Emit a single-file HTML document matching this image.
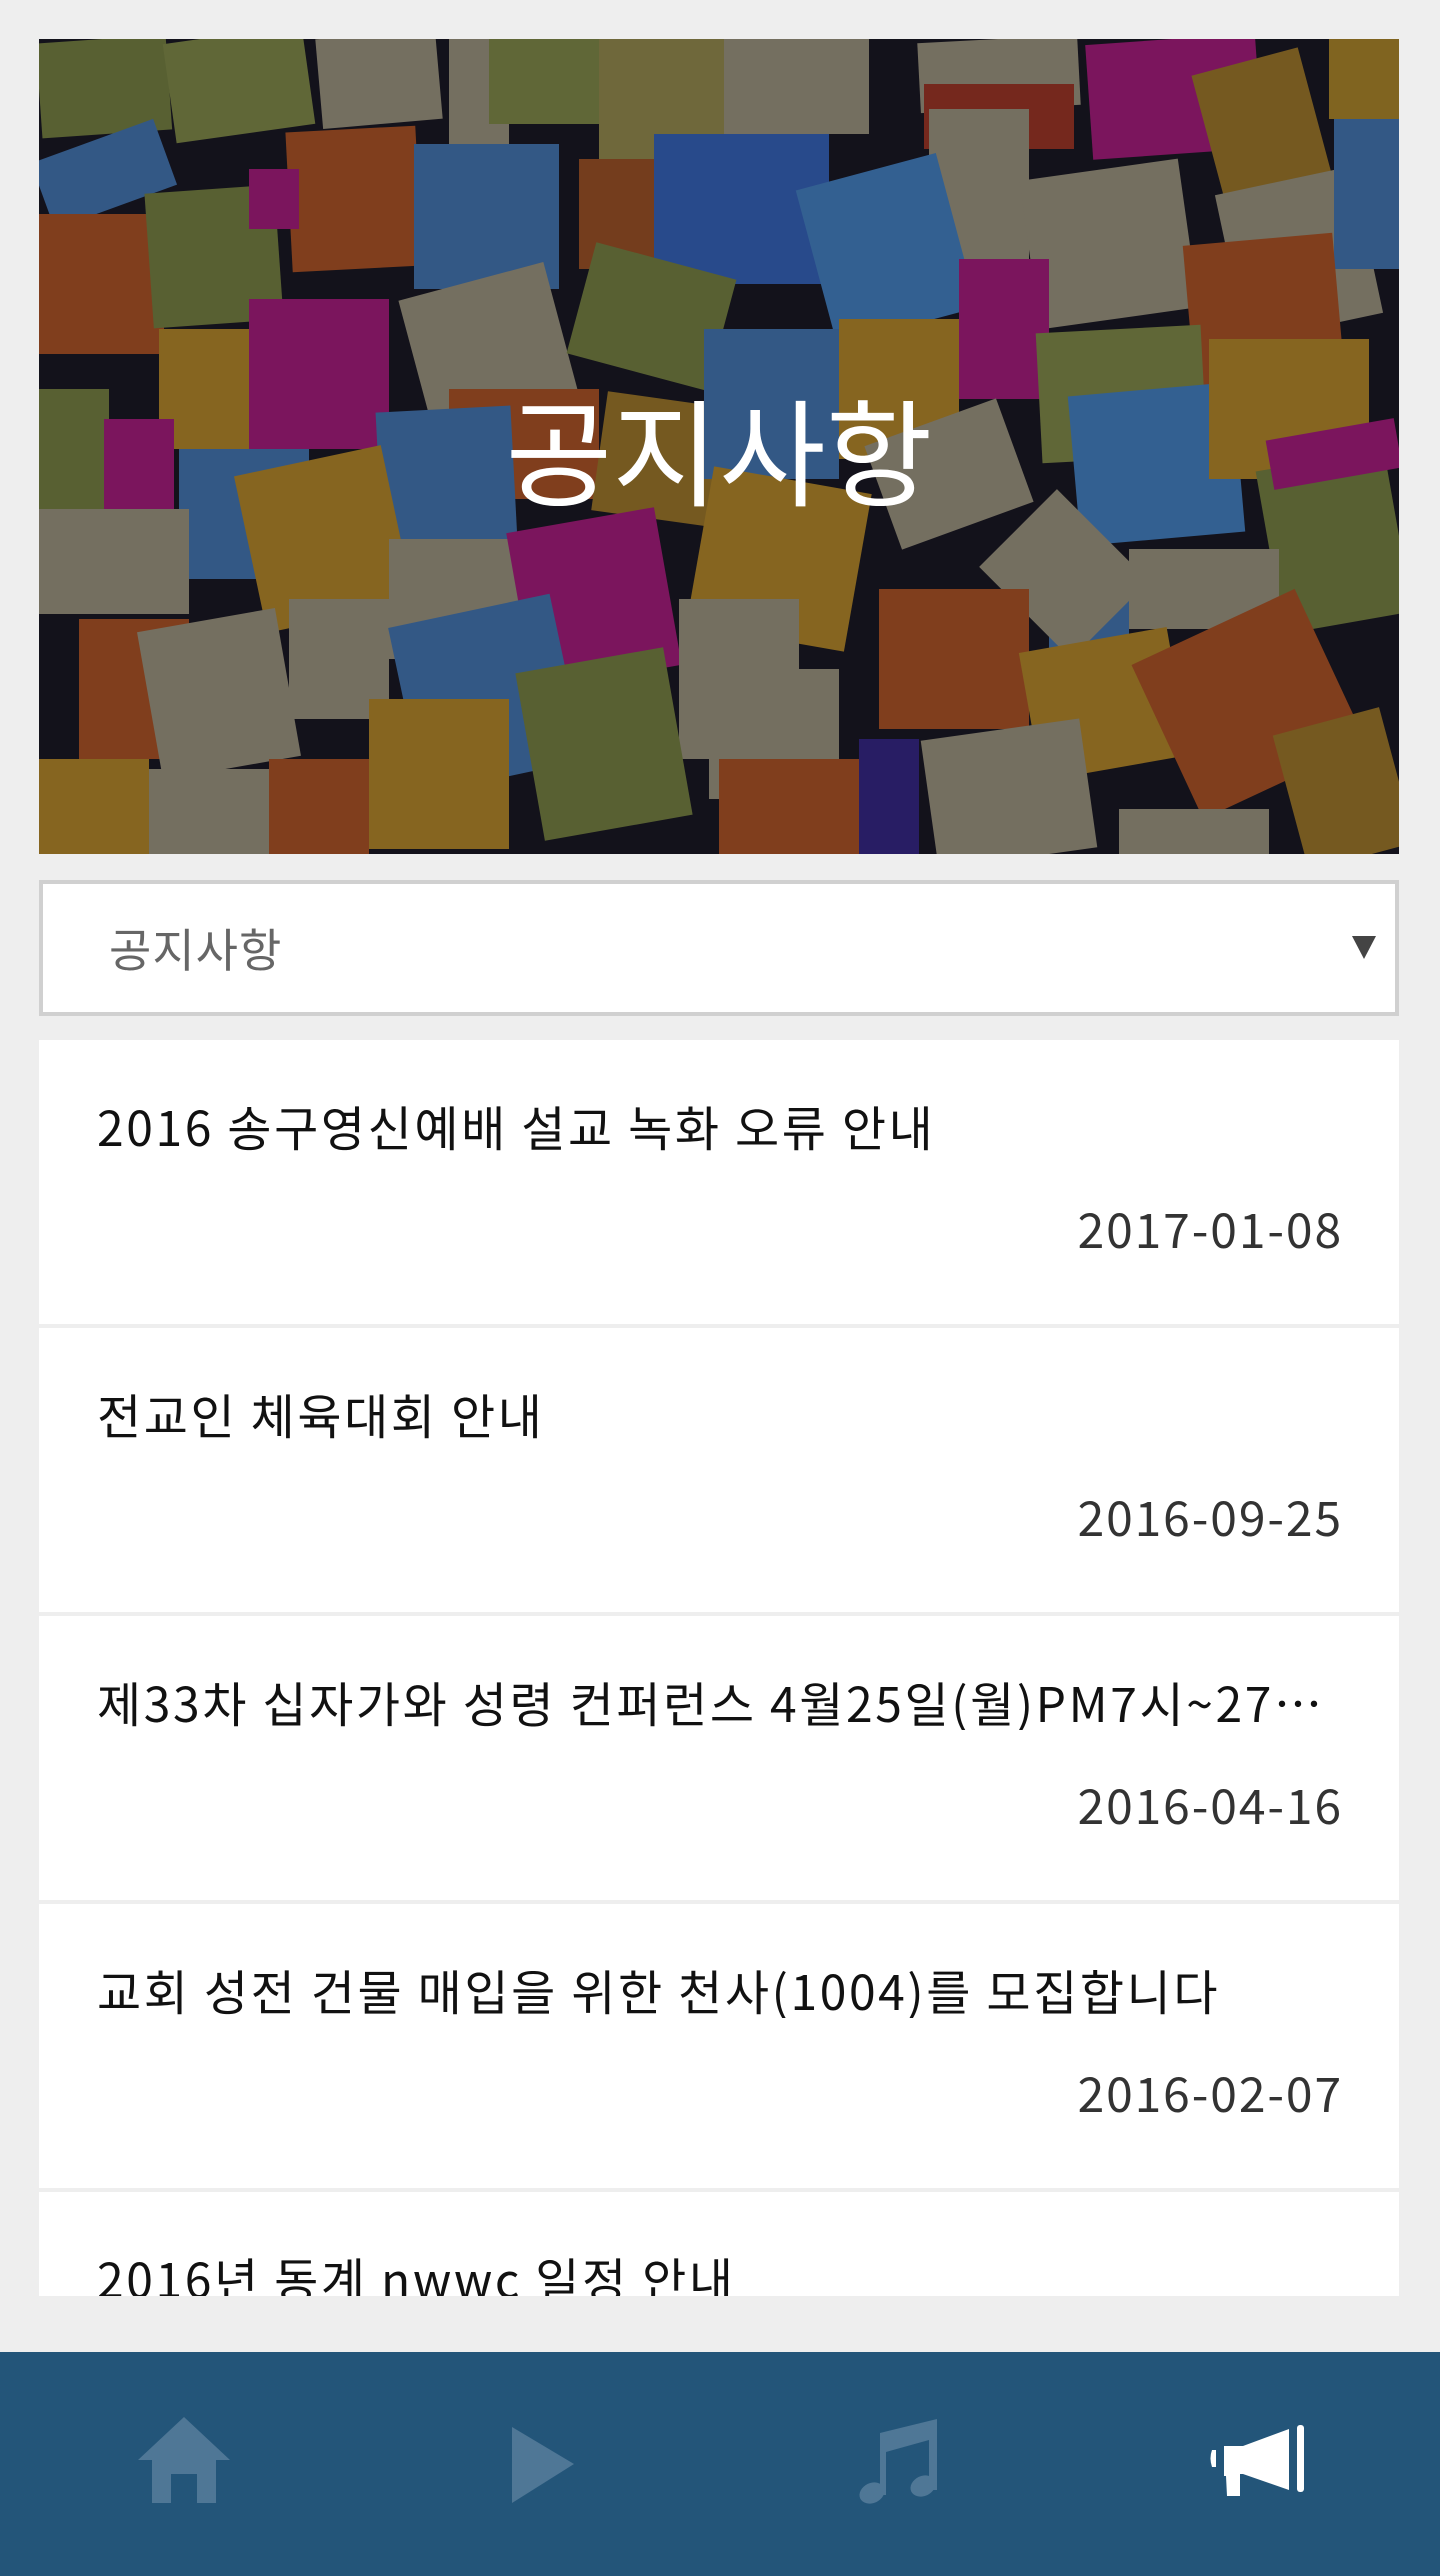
<!DOCTYPE html>
<html><head><meta charset="utf-8">
<style>
*{margin:0;padding:0;box-sizing:border-box}
html,body{width:1440px;height:2576px;background:#eeeeee;overflow:hidden;font-family:"Liberation Sans","Noto Sans CJK KR",sans-serif}
#hero{position:absolute;left:39px;top:39px;width:1360px;height:815px;background:#1c1a28;overflow:hidden}
#hero div.n{position:absolute}
#hero .ov{position:absolute;left:0;top:0;width:100%;height:100%;background:rgba(0,0,0,0.3)}
.ht{position:absolute;left:0;width:100%;top:338px;text-align:center;color:#fff;font-size:116px;line-height:140px;font-family:"Noto Sans CJK KR",sans-serif}
.sel{position:absolute;left:39px;top:880px;width:1360px;height:136px;background:#fff;border:4px solid #d0d0d0}
.sel span{position:absolute;left:66px;top:36px;font-size:46px;line-height:56px;color:#666;letter-spacing:1px;font-family:"Noto Sans CJK KR",sans-serif}
.sel i{position:absolute;left:1309px;top:52px;width:0;height:0;border-left:12px solid transparent;border-right:12px solid transparent;border-top:23px solid #444}
.it{position:absolute;left:39px;width:1360px;height:284px;background:#fff;overflow:hidden}
.it .t{position:absolute;left:58px;top:56px;width:1250px;font-size:48px;line-height:58px;letter-spacing:2.6px;color:#111;white-space:nowrap;overflow:hidden;text-overflow:ellipsis;font-family:"Noto Sans CJK KR",sans-serif}
.it .d{position:absolute;right:56px;top:158px;font-size:48px;line-height:58px;letter-spacing:1.9px;color:#333;font-family:"Noto Sans CJK KR",sans-serif}
#nav{position:absolute;left:0;top:2352px;width:1440px;height:224px;background:#235579}
</style></head><body>
<div id="hero">
<div class="n" style="left:0;top:0;width:130px;height:95px;background:#7e8a48;transform:rotate(-4deg)"></div>
<div class="n" style="left:130px;top:-5px;width:140px;height:100px;background:#8a9450;transform:rotate(-8deg)"></div>
<div class="n" style="left:280px;top:-5px;width:120px;height:90px;background:#a79f8a;transform:rotate(-5deg)"></div>
<div class="n" style="left:410px;top:0;width:60px;height:120px;background:#a79f8a"></div>
<div class="n" style="left:450px;top:-5px;width:150px;height:90px;background:#8a9450"></div>
<div class="n" style="left:560px;top:0;width:130px;height:130px;background:#a09555"></div>
<div class="n" style="left:685px;top:0;width:145px;height:95px;background:#a79f8a"></div>
<div class="n" style="left:880px;top:0;width:160px;height:70px;background:#a79f8a;transform:rotate(-3deg)"></div>
<div class="n" style="left:885px;top:45px;width:150px;height:65px;background:#a83a2a"></div>
<div class="n" style="left:1050px;top:0;width:170px;height:115px;background:#b01f86;transform:rotate(-4deg)"></div>
<div class="n" style="left:1170px;top:20px;width:110px;height:150px;background:#a8802e;transform:rotate(-15deg)"></div>
<div class="n" style="left:1290px;top:0;width:70px;height:80px;background:#b8902e"></div>
<div class="n" style="left:0;top:100px;width:130px;height:70px;background:#4a7fbf;transform:rotate(-20deg)"></div>
<div class="n" style="left:250px;top:90px;width:130px;height:140px;background:#b85a2a;transform:rotate(-3deg)"></div>
<div class="n" style="left:375px;top:105px;width:145px;height:145px;background:#4a7fbf"></div>
<div class="n" style="left:540px;top:120px;width:75px;height:110px;background:#a7582a"></div>
<div class="n" style="left:615px;top:95px;width:175px;height:150px;background:#3a6ac8"></div>
<div class="n" style="left:890px;top:70px;width:100px;height:150px;background:#a79f8a"></div>
<div class="n" style="left:990px;top:130px;width:160px;height:150px;background:#a79f8a;transform:rotate(-8deg)"></div>
<div class="n" style="left:775px;top:130px;width:145px;height:160px;background:#4a8ad0;transform:rotate(-15deg)"></div>
<div class="n" style="left:1190px;top:140px;width:140px;height:150px;background:#a79f8a;transform:rotate(-12deg)"></div>
<div class="n" style="left:1295px;top:80px;width:65px;height:150px;background:#4a7fbf"></div>
<div class="n" style="left:0;top:175px;width:125px;height:140px;background:#b85a2a"></div>
<div class="n" style="left:110px;top:150px;width:130px;height:135px;background:#7e8a48;transform:rotate(-4deg)"></div>
<div class="n" style="left:210px;top:130px;width:50px;height:60px;background:#b01f86"></div>
<div class="n" style="left:375px;top:240px;width:150px;height:140px;background:#a79f8a;transform:rotate(-15deg)"></div>
<div class="n" style="left:540px;top:220px;width:145px;height:115px;background:#7e8a48;transform:rotate(15deg)"></div>
<div class="n" style="left:920px;top:220px;width:90px;height:140px;background:#b01f86"></div>
<div class="n" style="left:1150px;top:200px;width:150px;height:150px;background:#b85a2a;transform:rotate(-5deg)"></div>
<div class="n" style="left:120px;top:290px;width:110px;height:120px;background:#c0912e"></div>
<div class="n" style="left:210px;top:260px;width:140px;height:150px;background:#b01f86"></div>
<div class="n" style="left:0;top:350px;width:70px;height:130px;background:#7e8a48"></div>
<div class="n" style="left:65px;top:380px;width:70px;height:100px;background:#b01f86"></div>
<div class="n" style="left:140px;top:410px;width:130px;height:130px;background:#4a7fbf"></div>
<div class="n" style="left:410px;top:350px;width:150px;height:110px;background:#b85a2a"></div>
<div class="n" style="left:340px;top:370px;width:135px;height:135px;background:#4a7fbf;transform:rotate(-3deg)"></div>
<div class="n" style="left:560px;top:360px;width:120px;height:120px;background:#a8802e;transform:rotate(8deg)"></div>
<div class="n" style="left:665px;top:290px;width:135px;height:150px;background:#4a7fbf"></div>
<div class="n" style="left:800px;top:280px;width:120px;height:140px;background:#c0912e"></div>
<div class="n" style="left:840px;top:380px;width:140px;height:110px;background:#a79f8a;transform:rotate(-20deg)"></div>
<div class="n" style="left:1000px;top:290px;width:165px;height:130px;background:#8a9450;transform:rotate(-3deg)"></div>
<div class="n" style="left:1035px;top:350px;width:165px;height:150px;background:#4a8ad0;transform:rotate(-5deg)"></div>
<div class="n" style="left:1170px;top:300px;width:160px;height:140px;background:#c0912e"></div>
<div class="n" style="left:1230px;top:420px;width:130px;height:165px;background:#7e8a48;transform:rotate(-10deg)"></div>
<div class="n" style="left:1230px;top:390px;width:130px;height:50px;background:#b01f86;transform:rotate(-10deg)"></div>
<div class="n" style="left:0;top:470px;width:150px;height:105px;background:#a79f8a"></div>
<div class="n" style="left:210px;top:420px;width:150px;height:160px;background:#c0912e;transform:rotate(-12deg)"></div>
<div class="n" style="left:350px;top:500px;width:130px;height:120px;background:#a79f8a"></div>
<div class="n" style="left:480px;top:480px;width:150px;height:160px;background:#b01f86;transform:rotate(-10deg)"></div>
<div class="n" style="left:660px;top:440px;width:160px;height:160px;background:#c0912e;transform:rotate(10deg)"></div>
<div class="n" style="left:1010px;top:530px;width:80px;height:90px;background:#4a7fbf"></div>
<div class="n" style="left:960px;top:480px;width:130px;height:110px;background:#a79f8a;transform:rotate(45deg)"></div>
<div class="n" style="left:1090px;top:510px;width:150px;height:80px;background:#a79f8a"></div>
<div class="n" style="left:840px;top:550px;width:150px;height:140px;background:#b85a2a"></div>
<div class="n" style="left:990px;top:600px;width:150px;height:130px;background:#c0912e;transform:rotate(-10deg)"></div>
<div class="n" style="left:1120px;top:580px;width:180px;height:170px;background:#b85a2a;transform:rotate(-25deg)"></div>
<div class="n" style="left:40px;top:580px;width:110px;height:140px;background:#b85a2a"></div>
<div class="n" style="left:110px;top:580px;width:140px;height:150px;background:#a79f8a;transform:rotate(-10deg)"></div>
<div class="n" style="left:250px;top:560px;width:100px;height:120px;background:#a79f8a"></div>
<div class="n" style="left:365px;top:570px;width:165px;height:170px;background:#4a7fbf;transform:rotate(-12deg)"></div>
<div class="n" style="left:640px;top:560px;width:120px;height:160px;background:#a79f8a"></div>
<div class="n" style="left:490px;top:620px;width:150px;height:170px;background:#7e8a48;transform:rotate(-10deg)"></div>
<div class="n" style="left:670px;top:630px;width:130px;height:130px;background:#a79f8a"></div>
<div class="n" style="left:0;top:720px;width:110px;height:95px;background:#c0912e"></div>
<div class="n" style="left:110px;top:730px;width:120px;height:85px;background:#a79f8a"></div>
<div class="n" style="left:230px;top:720px;width:100px;height:95px;background:#b85a2a"></div>
<div class="n" style="left:330px;top:660px;width:140px;height:150px;background:#c0912e"></div>
<div class="n" style="left:680px;top:720px;width:140px;height:95px;background:#b85a2a"></div>
<div class="n" style="left:820px;top:700px;width:60px;height:115px;background:#3a2a90"></div>
<div class="n" style="left:890px;top:690px;width:160px;height:130px;background:#a79f8a;transform:rotate(-8deg)"></div>
<div class="n" style="left:1080px;top:770px;width:150px;height:50px;background:#a79f8a"></div>
<div class="n" style="left:1250px;top:680px;width:110px;height:140px;background:#a8802e;transform:rotate(-15deg)"></div>
<div class="ov"></div>
<div class="ht">공지사항</div>
</div>
<div class="sel"><span>공지사항</span><i></i></div>
<div class="it" style="top:1040px"><div class="t">2016 송구영신예배 설교 녹화 오류 안내</div><div class="d">2017-01-08</div></div>
<div class="it" style="top:1328px"><div class="t">전교인 체육대회 안내</div><div class="d">2016-09-25</div></div>
<div class="it" style="top:1616px"><div class="t">제33차 십자가와 성령 컨퍼런스 4월25일(월)PM7시~27일(수) 안내</div><div class="d">2016-04-16</div></div>
<div class="it" style="top:1904px"><div class="t">교회 성전 건물 매입을 위한 천사(1004)를 모집합니다</div><div class="d">2016-02-07</div></div>
<div class="it" style="top:2192px;height:104px"><div class="t">2016년 동계 nwwc 일정 안내</div></div>
<div id="nav">
<svg width="1440" height="224" viewBox="0 2352 1440 224" style="position:absolute;left:0;top:0">
<path fill="#4f7796" d="M184 2417 L230 2460 L216 2460 L216 2503 L197 2503 L197 2474 L171 2474 L171 2503 L152 2503 L152 2460 L138 2460 Z"/>
<path fill="#4f7796" d="M512 2427 L574 2464 L512 2503 Z"/>
<path fill="#4f7796" d="M880 2433 L937 2419 L937 2490 L929 2490 L929 2440 L886 2452 L886 2495 L880 2495 Z"/>
<ellipse cx="872" cy="2493" rx="13" ry="10" fill="#4f7796" transform="rotate(-25 872 2493)"/>
<ellipse cx="923" cy="2486" rx="13" ry="10" fill="#4f7796" transform="rotate(-25 923 2486)"/>
<path fill="#fff" d="M1216 2450 L1216 2467 L1212 2467 Q1209 2458 1212 2450 Z"/>
<path fill="#fff" d="M1224 2446 L1243 2446 L1289 2429 L1289 2490 L1243 2474 L1240 2474 L1240 2496 L1227 2496 L1226 2476 L1224 2476 Z"/>
<rect x="1297" y="2425" width="7" height="67" rx="3" fill="#fff"/>
</svg>
</div>
</body></html>
